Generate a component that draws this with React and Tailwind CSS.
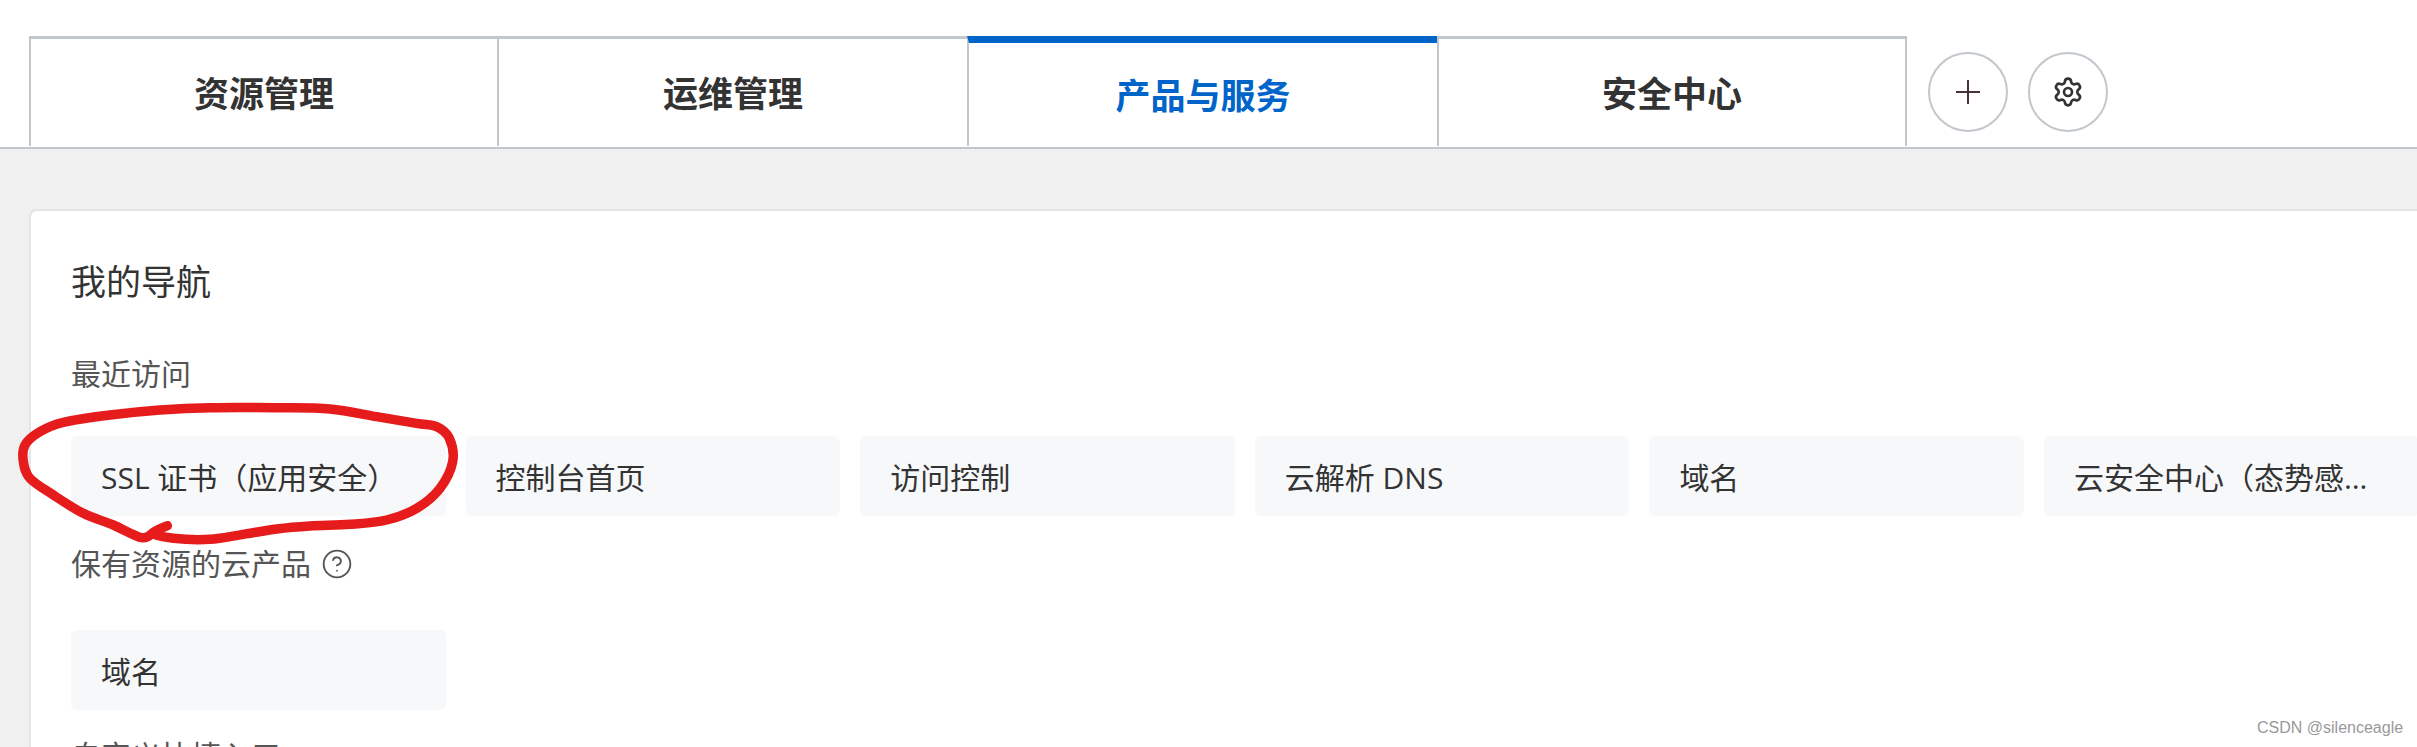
import React from "react";
import { Settings, CircleHelp } from "lucide-react";

const tabs = [
  { label: "资源管理", first: true },
  { label: "运维管理" },
  { label: "产品与服务", active: true },
  { label: "安全中心", last: true },
];

const recent = ["SSL 证书（应用安全）", "控制台首页", "访问控制", "云解析 DNS", "域名", "云安全中心（态势感知）"];

// Hand-drawn annotation: points measured from the reference
const raw = [
  [472, 392], [430, 415], [490, 430], [600, 433], [700, 418], [800, 402], [900, 393], [1020, 388],
  [1130, 375], [1220, 340], [1290, 280], [1328, 200], [1318, 130], [1280, 95], [1220, 85], [1100, 65],
  [960, 42], [800, 38], [600, 38], [450, 45], [300, 60], [160, 82], [90, 110], [45, 150],
  [40, 200], [60, 250], [130, 300], [220, 355], [310, 390], [395, 428], [430, 412],
];
const pts = raw.map(([x, y]) => [10 + x / 3, 395 + y / 3]);
function smooth(p) {
  let d = `M${p[0][0]} ${p[0][1]}`;
  for (let i = 0; i < p.length - 1; i++) {
    const a = p[Math.max(i - 1, 0)], b = p[i], c = p[i + 1], e = p[Math.min(i + 2, p.length - 1)];
    d += ` C${b[0] + (c[0] - a[0]) / 6} ${b[1] + (c[1] - a[1]) / 6} ${c[0] - (e[0] - b[0]) / 6} ${c[1] - (e[1] - b[1]) / 6} ${c[0]} ${c[1]}`;
  }
  return d;
}

function Item({ children }) {
  return (
    <div className="w-[374.6px] h-[80px] shrink-0 rounded-md bg-[#f7f8fa] px-[30px] pt-[3px] flex items-center text-[30px] text-[#333]">
      <span className="truncate">{children}</span>
    </div>
  );
}

export default function App() {
  return (
    <div className="relative w-[2417px] h-[747px] overflow-hidden bg-[#f0f0f0] font-['Open_Sans','Noto_Sans_CJK_SC',sans-serif]">
      <div className="h-[149px] bg-white border-b-2 border-[#c2c7cc] pt-[36px] pl-[29px] flex items-start">
        {tabs.map((t) => (
          <div
            key={t.label}
            className={`${t.first ? "w-[468px]" : "w-[470px]"} h-[110px] border-l-2 border-[#c2c7cc] pt-[3px] flex items-center justify-center text-[35px] font-bold ${
              t.active ? "border-t-[7px] border-t-[#0064c8] text-[#0064c8]" : "border-t-[3px] text-[#333]"
            } ${t.last ? "border-r-2" : ""}`}
          >
            {t.label}
          </div>
        ))}
        <div className="flex gap-[20px] ml-[21px] mt-[16px]">
          <div className="w-[80px] h-[80px] rounded-full border-2 border-[#c2c7cc] flex items-center justify-center">
            <svg width="24" height="24" viewBox="0 0 24 24" stroke="#4a3038" strokeWidth="2" fill="none">
              <path d="M0 12H24M12 0V24" />
            </svg>
          </div>
          <div className="w-[80px] h-[80px] rounded-full border-2 border-[#c2c7cc] flex items-center justify-center">
            <Settings size={32} strokeWidth={2} color="#333" />
          </div>
        </div>
      </div>

      <div className="mt-[60px] ml-[29px] h-[600px] bg-white border-2 border-[#e4e5e6] border-r-0 rounded-tl-lg pt-[51px] pl-[40px]">
        <div className="text-[35px] leading-[40px] text-[#333]">我的导航</div>
        <div className="mt-[52px] text-[30px] leading-[40px] text-[#555]">最近访问</div>
        <div className="mt-[42px] flex gap-[20px]">
          {recent.map((r) => (
            <Item key={r}>{r}</Item>
          ))}
        </div>
        <div className="mt-[28px] flex items-center gap-[10px] text-[30px] leading-[40px] text-[#555]">
          保有资源的云产品
          <CircleHelp size={32} strokeWidth={1.4} color="#555" />
        </div>
        <div className="mt-[46px] flex gap-[20px]">
          <Item>域名</Item>
        </div>
        <div className="mt-[26px] text-[30px] leading-[40px] text-[#555]">自定义快捷入口</div>
      </div>

      <svg className="absolute left-0 top-0 pointer-events-none" width="2417" height="747" fill="none">
        <path d={smooth(pts)} stroke="#e61c1c" strokeWidth="9.5" strokeLinecap="round" strokeLinejoin="round" />
      </svg>

      <div className="absolute left-[2257px] top-[718px] text-[16px] leading-[20px] text-[#999] font-['Liberation_Sans',sans-serif] whitespace-nowrap">
        CSDN @silenceagle
      </div>
    </div>
  );
}
